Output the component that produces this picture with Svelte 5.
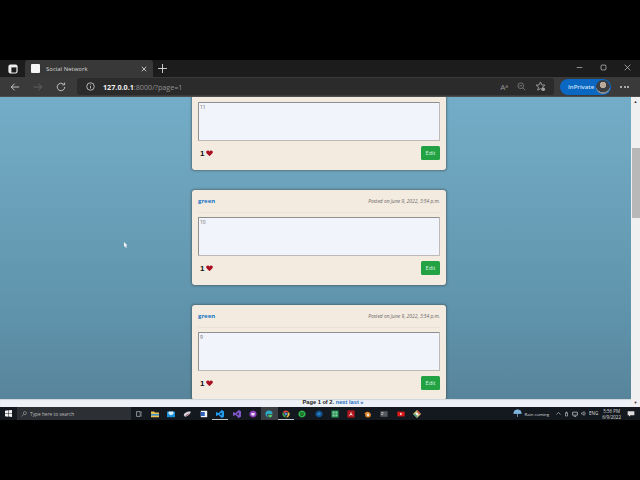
<script>
  const posts = [
    { id: 11, clipped: true },
    { id: 10, clipped: false },
    { id: 9, clipped: false }
  ];
  const apps = [
    { s: [['M0 2h4l1 1h5v6H0z', '#e9c04f'], ['M0 5h10v2H0z', '#3c8fc4']] },
    { s: [['M0 2h10v7H0z', '#1b8fd8'], ['M2 2h6v3L5 6.500 2 5z', '#d6eefb']] },
    { s: [['M1 6.500C1 4 5 1.500 9.500 2c.5 3-3.500 6-7 6.500z', '#d4d4de'], ['M3 7l5-3v1L4 7.500z', '#a0404a']] },
    { s: [['M1 1h8v8H1z', '#f2f5fa'], ['M1 2.500h5v5H1z', '#2b62c0']] },
    { s: [['M7 0l3 1.500v7L7 10 3 6 1 7.500 0 7V3l1-.5L3 4z', '#1f9cf0'], ['M7 3L4.500 5 7 7z', '#14181f']] },
    { s: [['M7 0l3 1.500v7L7 10 3 6 1 7.500 0 7V3l1-.5L3 4z', '#7f57c9'], ['M7 3L4.500 5 7 7z', '#14181f']] },
    { s: [['M5 .5a4.500 4.500 0 1 0 .01 0z', '#8c3fbb'], ['M3 3l1 .6h2L7 3v2.500c0 1-1 1.500-2 1.500S3 6.500 3 5.500z', '#f0e8f5']] },
    { s: [['M5 .5a4.500 4.500 0 0 1 4.500 4.500H3a3 3 0 0 0 3 4.300A4.500 4.500 0 0 1 .5 5 4.500 4.500 0 0 1 5 .5z', '#2ba6c4'], ['M9.500 5.500A4.500 4.500 0 0 1 6 9.300 3 3 0 0 1 4 6h5.500z', '#59c36a']] },
    { s: [['M5 .5a4.500 4.500 0 0 1 3.900 2.300H5L2.500 5 1.500 2A4.500 4.500 0 0 1 5 .5z', '#d9463c'], ['M9 3a4.500 4.500 0 0 1-4 6.500L7 6.500V3z', '#e6bd3a'], ['M1.200 2.500L3.500 6.500 5 7l-1 2.400A4.500 4.500 0 0 1 1.200 2.500z', '#3fa04f'], ['M5 3.200a1.800 1.800 0 1 0 .01 0z', '#4a86d8']] },
    { s: [['M5 .5a4.500 4.500 0 1 0 .01 0z', '#2eb24a'], ['M2.500 3.800c2-.5 3.500-.3 5 .5M3 5.300c1.500-.3 3-.2 4 .4M3.200 6.700c1.200-.2 2.400-.1 3.300.3', 'none']] },
    { s: [['M5 .5a4.500 4.500 0 1 0 .01 0z', '#12508c'], ['M5 3a2 2 0 1 0 .01 0z', '#2a84c4']] },
    { s: [['M.5 .5h9v9h-9z', '#1e8a4e'], ['M2 2h6v6H2z', '#8fd0a8'], ['M4.500 2h1v6h-1zM2 4.500h6v1H2z', '#1e8a4e']] },
    { s: [['M.5 .5h9v9h-9z', '#b4161e'], ['M5 2l1 3 2 2-3-.6L2 7.500 4 5z', '#f4dcdc']] },
    { s: [['M5 2.500a3.500 3.500 0 1 0 .01 0z', '#e58a2c'], ['M5 4.500a1.500 1.500 0 1 0 .01 0z', '#f0e6d8'], ['M0 4.500l4-2.500 1 1-3 2z', '#e58a2c']] },
    { s: [['M.5 1.500h9v7h-9z', '#55585c'], ['M1.500 3h3v1h-3zM1.500 5h2v1h-2z', '#e8e8e8']] },
    { s: [['M.5 2h9v6h-9z', '#dd1a1a'], ['M4 3.500L6.500 5 4 6.500z', '#fff']] },
    { s: [['M5 0l5 5-5 5-5-5z', '#c9c27a'], ['M5 0l5 5H5z', '#d05a4a'], ['M0 5h5v5z', '#4a9a7c'], ['M3.500 3.500h3v3h-3z', '#f0f0f0']] }
  ];
</script>

<div class="screen">
  <div class="letterbox top"></div>

  <div class="tabstrip">
    <svg class="tabs-icon" viewBox="0 0 10 10" width="10" height="10"><rect x="1" y="1" width="8" height="8" rx="1.500" fill="none" stroke="#eee" stroke-width="1.200"/><rect x="1" y="1" width="8" height="2.400" fill="#eee"/><rect x="1" y="1" width="2.400" height="8" fill="#eee"/></svg>
    <div class="tab">
      <span class="favicon"></span>
      <span class="tab-title">Social Network</span>
      <svg class="tab-x" viewBox="0 0 8 8" width="6" height="6"><path d="M1 1l6 6M7 1l-6 6" stroke="#ddd" stroke-width="1.100"/></svg>
    </div>
    <svg class="plus" viewBox="0 0 10 10" width="9" height="9"><path d="M5 0v10M0 5h10" stroke="#ddd" stroke-width="1"/></svg>
    <div class="winctl">
      <svg viewBox="0 0 10 10" width="7" height="7"><path d="M1 5h8" stroke="#bbb" stroke-width="1"/></svg>
      <svg viewBox="0 0 10 10" width="7" height="7"><rect x="1.500" y="1.500" width="7" height="7" rx="1.500" fill="none" stroke="#ccc" stroke-width="1"/></svg>
      <svg viewBox="0 0 10 10" width="7" height="7"><path d="M1 1l8 8M9 1l-8 8" stroke="#ccc" stroke-width="1"/></svg>
    </div>
  </div>

  <div class="toolbar">
    <svg class="nav" viewBox="0 0 12 12" width="10" height="10"><path d="M11 6H1.500M5.500 2L1.500 6l4 4" fill="none" stroke="#ccc" stroke-width="1.100"/></svg>
    <svg class="nav" viewBox="0 0 12 12" width="10" height="10"><path d="M1 6h9.500M6.500 2l4 4-4 4" fill="none" stroke="#666" stroke-width="1.100"/></svg>
    <svg class="nav" viewBox="0 0 12 12" width="10" height="10"><path d="M10.500 6a4.500 4.500 0 1 1-1.400-3.300M10.300 .8v2.600H7.700" fill="none" stroke="#ccc" stroke-width="1.100"/></svg>
    <div class="address">
      <svg class="info" viewBox="0 0 12 12" width="9" height="9"><circle cx="6" cy="6" r="5" fill="none" stroke="#ddd" stroke-width="1"/><path d="M6 5.200v3.400M6 3.200v1" stroke="#ddd" stroke-width="1"/></svg>
      <span class="url"><b>127.0.0.1</b>:8000/?page=1</span>
      <div class="addr-right">
        <span class="aa">A<span class="small">a</span></span>
        <svg viewBox="0 0 12 12" width="9" height="9"><circle cx="5" cy="5" r="3.800" fill="none" stroke="#8a8a8a" stroke-width="1"/><path d="M8 8l3 3M3.200 5h3.600" stroke="#8a8a8a" stroke-width="1"/></svg>
        <svg viewBox="0 0 12 12" width="11" height="11"><path d="M6 1l1.400 3.200 3.400.3-2.600 2.200.8 3.300L6 8.300 3 10l.8-3.300L1.200 4.500l3.400-.3z" fill="none" stroke="#a0a0a0" stroke-width="1"/><circle cx="9" cy="9" r="2" fill="#a0a0a0"/></svg>
      </div>
    </div>
    <div class="inprivate">
      <span class="ip-label">InPrivate</span>
      <span class="avatar"></span>
    </div>
    <span class="more"><i></i><i></i><i></i></span>
  </div>

  <div class="viewport">
    <main class="page">
      {#each posts as p}
        <article class="card" class:clipped={p.clipped}>
          {#if !p.clipped}
            <header class="head">
              <a class="user" href="#u">green</a>
              <span class="date">Posted on June 9, 2022, 3:54 p.m.</span>
            </header>
          {/if}
          <div class="body">{p.id}</div>
          <footer class="foot">
            <span class="likes">1
              <svg viewBox="0 0 12 11" width="7" height="6.500"><path d="M6 10.500L1 5.600C-.6 3.600.6.6 3.200.6 4.500.6 5.500 1.400 6 2.400 6.500 1.400 7.500.6 8.800.6c2.600 0 3.800 3 2.200 5z" fill="#a80f20"/></svg>
            </span>
            <button class="edit">Edit</button>
          </footer>
        </article>
      {/each}
    </main>
    <svg class="cursor" viewBox="0 0 4 6" width="4" height="6"><path d="M0 0l3.500 3.500H2L2.800 5.500 2 6 1 4 0 5z" fill="#f4f4f4"/></svg>
    <div class="vscroll">
      <span class="arrow">▲</span>
      <span class="thumb"></span>
      <span class="arrow down">▼</span>
    </div>
    <div class="pager"><b>Page 1 of 2.</b> <a href="#n">next</a> <a href="#l">last »</a></div>
  </div>

  <div class="taskbar">
    <svg class="win" viewBox="0 0 10 10" width="7" height="7"><path d="M0 1.200l4.500-.7v4.200H0zM5.200 .4L10 0v4.700H5.200zM0 5.300h4.500v4.200L0 8.800zM5.200 5.300H10V10l-4.800-.7z" fill="#f2f2f2"/></svg>
    <div class="search">
      <svg viewBox="0 0 10 10" width="6" height="6"><circle cx="6.500" cy="3.500" r="2.600" fill="none" stroke="#aaa"/><path d="M4.500 5.500L1 9" stroke="#aaa"/></svg>
      <span>Type here to search</span>
    </div>
    <svg class="taskview" viewBox="0 0 10 10" width="6" height="6"><path d="M1 1h6v8H1zM9 1v2M9 4.500v1.500M9 7.500v1.500" fill="none" stroke="#ddd"/></svg>
    <div class="apps">
      {#each apps as ic, i}
        <span class="slot" class:active={i === 7} class:open={i === 4 || i === 8}>
          <svg viewBox="0 0 10 10" width="8" height="8">
            {#each ic.s as [d, f]}
              {#if f === 'none'}
                <path {d} fill="none" stroke="#0d2a12" stroke-width=".8"/>
              {:else}
                <path {d} fill={f}/>
              {/if}
            {/each}
          </svg>
        </span>
      {/each}
    </div>
    <div class="tray">
      <svg viewBox="0 0 12 12" width="9" height="9"><path d="M1 6a5 5 0 0 1 10 0zM6 6v4.500" fill="#7fb5dd" stroke="#7fb5dd"/></svg>
      <span class="rain">Rain coming</span>
      <svg class="sys" viewBox="0 0 10 10" width="5" height="5"><path d="M1 7l4-4 4 4" fill="none" stroke="#ccc" stroke-width="1.300"/></svg>
      <svg class="sys" viewBox="0 0 10 10" width="5" height="6"><path d="M3 3h4v6H3zM4 3V1h2v2" fill="none" stroke="#ccc" stroke-width="1.200"/></svg>
      <svg class="sys" viewBox="0 0 10 10" width="6" height="6"><path d="M1 2h8v5H1zM3 9h4" fill="none" stroke="#ccc" stroke-width="1.200"/></svg>
      <svg class="sys" viewBox="0 0 10 10" width="5" height="5"><path d="M1 4h2l3-3v8L3 6H1zM8 3c1 1 1 3 0 4" fill="none" stroke="#ccc" stroke-width="1.200"/></svg>
      <span class="eng">ENG</span>
      <span class="clock"><span>5:56 PM</span><span>6/9/2022</span></span>
      <svg viewBox="0 0 12 12" width="8" height="8"><path d="M1 2h10v6H5L3 10V8H1z" fill="#ddd"/></svg>
    </div>
  </div>

  <div class="letterbox bottom"></div>
</div>

<style>
  :global(body) { margin: 0; background: #000; }
  .screen {
    width: 640px; height: 480px; display: flex; flex-direction: column;
    overflow: hidden; background: #000;
    font-family: "Open Sans", "Liberation Sans", sans-serif;
  }
  .letterbox { background: #000; flex: none; }
  .top { height: 60px; }
  .bottom { flex: 1; }

  .tabstrip { height: 17px; flex: none; background: #1c1c1c; display: flex; align-items: center; padding-left: 8px; }
  .tabs-icon { margin-right: 7px; flex: none; }
  .tab { width: 128px; height: 17px; background: #383838; border-radius: 3px 3px 0 0; display: flex; align-items: center; padding-left: 6px; box-sizing: border-box; flex: none; }
  .favicon { width: 9px; height: 9px; background: #f5f5f5; border-radius: 1px; margin-right: 6px; flex: none; }
  .tab-title { font-size: 6px; color: #d6d6d6; flex: 1; white-space: nowrap; }
  .tab-x { margin-right: 6px; }
  .plus { margin-left: 5px; }
  .winctl { margin-left: auto; display: flex; gap: 17px; padding-right: 9px; margin-top: -2px; }

  .toolbar { height: 20px; flex: none; background: #3a3a3a; display: flex; align-items: center; padding-left: 10px; box-sizing: border-box; border-bottom: 1px solid #4c4c4c; }
  .nav { margin-right: 13px; flex: none; }
  .nav:nth-child(3) { margin-right: 11px; }
  .address { width: 477px; height: 17px; background: #2b2b2b; border-radius: 3px; display: flex; align-items: center; padding: 0 8px 0 9px; box-sizing: border-box; flex: none; }
  .info { flex: none; }
  .url { font-size: 7.200px; color: #8f8f8f; margin-left: 8px; white-space: nowrap; line-height: 12px; }
  .url b { color: #f0f0f0; }
  .addr-right { margin-left: auto; display: flex; align-items: center; gap: 9px; margin-right: 0; }
  .aa { font-size: 8px; color: #999; line-height: 11px; }
  .small { font-size: 5px; vertical-align: 2px; }
  .inprivate { width: 51px; height: 16px; border-radius: 8px; background: #0a67c2; display: flex; align-items: center; justify-content: space-between; padding: 0 1px 0 8px; box-sizing: border-box; flex: none; margin-left: 6px; }
  .ip-label { font-size: 6px; font-weight: 600; color: #cfe4f7; line-height: 10px; }
  .avatar { width: 14px; height: 14px; border-radius: 50%; background: radial-gradient(circle at 50% 35%, #b9aa9c 0 28%, #3b3f44 30% 62%, #8a8d90 64%); }
  .more { display: flex; gap: 1.500px; margin-left: 9px; }
  .more i { width: 2px; height: 2px; border-radius: 50%; background: #cfcfcf; display: block; }

  .viewport {
    height: 310px; flex: none; position: relative; overflow: hidden;
    background: linear-gradient(#74adc8 0%, #6ca2bb 30%, #5f93ac 70%, #578399 100%);
  }
  .page { width: 631px; display: flex; flex-direction: column; align-items: center; gap: 20px; }
  .card {
    width: 254px; height: 95px; flex: none; background: #f4ebe0; border-radius: 3px; box-sizing: border-box;
    padding: 0 6px; box-shadow: 0 0 2px 1px rgba(60,70,70,.5);
    margin-left: 7px; display: flex; flex-direction: column;
  }
  .card.clipped { height: 73px; padding-top: 5px; border-radius: 0 0 3px 3px; }
  .head { height: 22px; flex: none; display: flex; justify-content: space-between; align-items: center; border-bottom: 1px solid #ebe2d5; margin-bottom: 4px; }
  .user { color: #1a73c4; font-size: 6px; font-weight: 700; text-decoration: none; }
  .date { font-size: 4.900px; font-style: italic; color: #666; }
  .body { height: 39px; flex: none; box-sizing: border-box; background: #f1f4fb; border: 1px solid #8f8f8f; border-bottom-color: #bdb9b5; border-right-color: #bdb9b5; border-radius: 1px; font-size: 5px; color: #666; padding: 1px 1px; line-height: 7px; }
  .foot { flex: 1; display: flex; justify-content: space-between; align-items: center; padding-left: 2px; padding-bottom: 5px; }
  .likes { font-size: 8px; font-weight: 700; color: #111; display: flex; align-items: center; gap: 2px; font-family: "Liberation Sans", sans-serif; }
  .edit { width: 19px; height: 14px; padding: 0; border: none; border-radius: 1.500px; background: #22a243; color: #dff3e4; font-size: 5.500px; font-family: inherit; }

  .cursor { position: absolute; left: 124px; top: 145px; }
  .vscroll { position: absolute; top: 0; right: 0; bottom: 0; width: 9px; background: #f0f0f0; }
  .arrow { position: absolute; left: 0; right: 0; top: 1px; text-align: center; font-size: 4px; line-height: 7px; color: #333; }
  .arrow.down { top: auto; bottom: 1px; }
  .thumb { position: absolute; left: 1px; right: 0; top: 51px; height: 70px; background: #b8b8b8; }
  .pager {
    position: absolute; left: 0; right: 9px; bottom: 0; height: 8px; line-height: 7px; box-sizing: border-box; padding-left: 35px; text-align: center;
    background: #eef1f5; font-size: 5.700px; color: #222; font-family: "Liberation Sans", sans-serif;
    box-shadow: inset 0 1px 1px #cfd6dc;
  }
  .pager a { color: #1e6fc0; font-weight: 700; text-decoration: none; }

  .taskbar { height: 13px; flex: none; background: #14181f; display: flex; align-items: center; }
  .win { margin-left: 5px; margin-right: 5px; flex: none; }
  .search { width: 114px; height: 13px; background: #2c2f33; display: flex; align-items: center; gap: 3px; padding-left: 4px; box-sizing: border-box; flex: none; }
  .search span { font-size: 4.800px; color: #bdbdbd; line-height: 8px; }
  .taskview { margin-left: 5px; margin-right: 4.500px; flex: none; }
  .apps { display: flex; }
  .slot { width: 16.400px; height: 13px; display: flex; align-items: center; justify-content: center; box-sizing: border-box; flex: none; }
  .slot.active { background: #3a3d42; }
  .slot.open { box-shadow: inset 0 -1px 0 #b9c4cc; }
  .tray { margin-left: auto; display: flex; align-items: center; gap: 3px; padding-right: 5px; color: #ddd; }
  .rain { font-size: 4.300px; margin: 0 4px 0 0; line-height: 8px; }
  .sys { flex: none; }
  .eng { font-size: 4.500px; line-height: 7px; margin-left: 0; }
  .clock { display: flex; flex-direction: column; align-items: center; font-size: 4.500px; line-height: 6px; margin: 0 3px 0 1px; }
</style>
